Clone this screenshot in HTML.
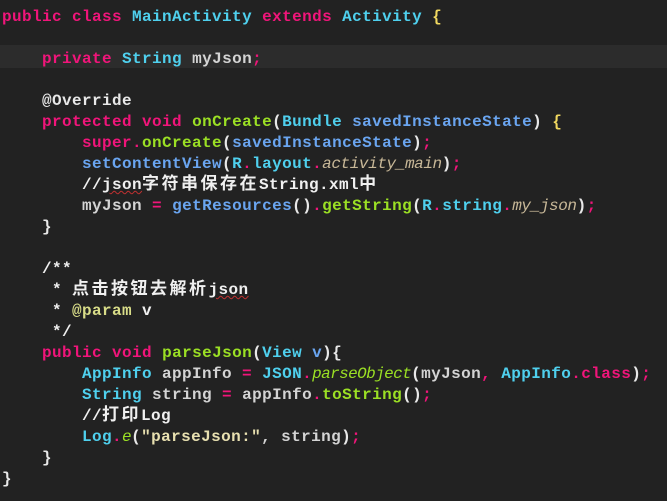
<!DOCTYPE html>
<html><head><meta charset="utf-8"><style>
html,body{margin:0;padding:0;background:#222222;width:667px;height:501px;overflow:hidden}
pre{margin:0;padding:7px 0 0 2px;font-family:"Liberation Mono","Noto Sans CJK SC",monospace;font-weight:bold;font-size:16px;line-height:21px;color:#d4d4d4;position:relative;letter-spacing:0.4px}
.hl{position:absolute;left:0;top:45px;width:667px;height:23px;background:#2c2c2c}
.k{color:#f0157a}.t{color:#4fd0ee}.f{color:#9be024}.p{color:#6aa5f0}.i{font-style:italic;color:#c8b898;font-weight:normal;letter-spacing:-0.4px}
.fi{font-style:italic;color:#9be024;font-weight:normal;letter-spacing:-0.6px}.c{color:#f0f0f0}.a{color:#d8dc88}.y{color:#f0d860}.w{color:#e8e8e8}.s{color:#e8e0b0}
.z{letter-spacing:2.5px;font-size:17px}.u{text-decoration:underline wavy #c03030;text-decoration-thickness:1px}
span.r{position:relative}
</style></head><body><pre><div class="hl"></div><span class="r"><span class="k">public class</span> <span class="t">MainActivity</span> <span class="k">extends</span> <span class="t">Activity</span> <span class="y">{</span>

    <span class="k">private</span> <span class="t">String</span> myJson<span class="k">;</span>

    <span class="w">@Override</span>
    <span class="k">protected void</span> <span class="f">onCreate</span><span class="w">(</span><span class="t">Bundle</span> <span class="p">savedInstanceState</span><span class="w">)</span> <span class="y">{</span>
        <span class="k">super.</span><span class="f">onCreate</span><span class="w">(</span><span class="p">savedInstanceState</span><span class="w">)</span><span class="k">;</span>
        <span class="p">setContentView</span><span class="w">(</span><span class="t">R</span><span class="k">.</span><span class="t">layout</span><span class="k">.</span><span class="i">activity_main</span><span class="w">)</span><span class="k">;</span>
        <span class="c">//<span class="u">json</span><span class="z">字符串保存在</span>String.xml<span class="z">中</span></span>
        myJson <span class="k">=</span> <span class="p">getResources</span><span class="w">()</span><span class="k">.</span><span class="f">getString</span><span class="w">(</span><span class="t">R</span><span class="k">.</span><span class="t">string</span><span class="k">.</span><span class="i">my_json</span><span class="w">)</span><span class="k">;</span>
    <span class="w">}</span>

    <span class="c">/**</span>
<span class="c">     * <span class="z">点击按钮去解析</span><span class="u">json</span></span>
<span class="c">     * <span class="a">@param</span> v</span>
<span class="c">     */</span>
    <span class="k">public void</span> <span class="f">parseJson</span><span class="w">(</span><span class="t">View</span> <span class="p">v</span><span class="w">){</span>
        <span class="t">AppInfo</span> appInfo <span class="k">=</span> <span class="t">JSON</span><span class="k">.</span><span class="fi">parseObject</span><span class="w">(</span>myJson<span class="k">,</span> <span class="t">AppInfo</span><span class="k">.class</span><span class="w">)</span><span class="k">;</span>
        <span class="t">String</span> string <span class="k">=</span> appInfo<span class="k">.</span><span class="f">toString</span><span class="w">()</span><span class="k">;</span>
        <span class="c">//<span class="z">打印</span>Log</span>
        <span class="t">Log</span><span class="k">.</span><span class="fi">e</span><span class="w">(</span><span class="s">"parseJson:"</span>, string<span class="w">)</span><span class="k">;</span>
    <span class="w">}</span>
<span class="w">}</span></span></pre></body></html>
